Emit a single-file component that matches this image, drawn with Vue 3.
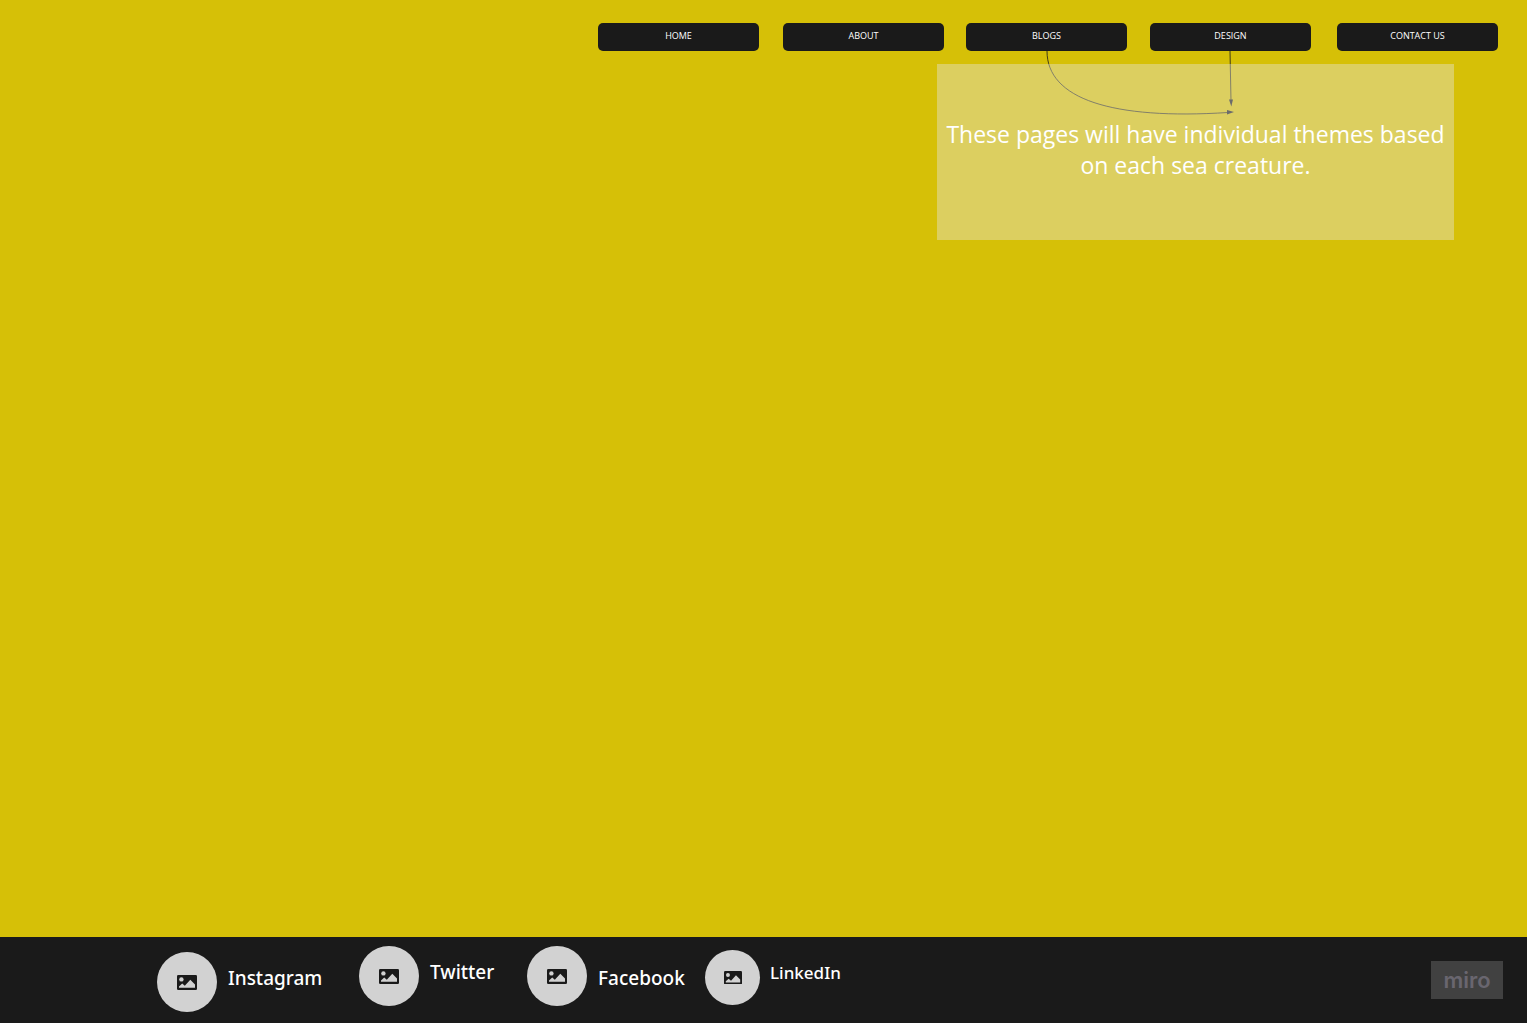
<script setup>
const pages = ['HOME', 'ABOUT', 'BLOGS', 'DESIGN', 'CONTACT US']
const socials = [
  { name: 'Instagram', place: 'low' },
  { name: 'Twitter', place: 'high' },
  { name: 'Facebook', place: 'high level' },
  { name: 'LinkedIn', place: 'small' },
]
</script>

<template>
  <div class="page">
    <header class="top">
      <nav class="menu" aria-label="Main">
        <a v-for="page in pages" :key="page" class="tab" href="#">{{ page }}</a>
      </nav>
      <svg class="arrows" width="200" height="72" viewBox="0 0 200 72" aria-hidden="true">
        <g fill="none" stroke="#1a1a1a" stroke-opacity="0.8">
          <path d="M7 0C7 48 72 69 188 61.500" />
          <path d="M190 0L191 50" />
        </g>
        <path d="M187 59L194 61L187 63.500Z" fill="#1a1a1a" />
        <path d="M189 48.500H193L191.300 55.500Z" fill="#1a1a1a" />
      </svg>
      <p class="note">These pages will have individual themes based on each sea creature.</p>
    </header>
    <main class="content"></main>
    <footer class="foot">
      <div class="socials">
        <a v-for="s in socials" :key="s.name" class="social" :class="s.place" href="#">
          <span class="disc">
            <svg class="picture" viewBox="0 0 20 15" aria-hidden="true">
              <rect width="20" height="15" rx="1.300" fill="#1a1a1a" />
              <circle cx="4.400" cy="4.400" r="2.200" fill="#d2d2d2" />
              <path d="M2 12.800V11.500L5.200 8.500L7.800 10.800L13.300 4.700L18 9.500V12.800Z" fill="#d2d2d2" />
            </svg>
          </span>
          <span class="label">{{ s.name }}</span>
        </a>
      </div>
      <span class="brand">miro</span>
    </footer>
  </div>
</template>

<style>
body {
  margin: 0;
}
</style>

<style scoped>
.page {
  display: flex;
  flex-direction: column;
  min-height: 100vh;
  background: #d6c007;
  font-family: "Open Sans", "Noto Sans", sans-serif;
}
.top {
  position: relative;
  display: flex;
  flex-direction: column;
  align-items: flex-end;
  padding-top: 23px;
}
.menu {
  display: grid;
  grid-template-columns: 185px 183px 184px 187px 161px;
  margin-right: 29px;
}
.tab {
  display: flex;
  align-items: center;
  justify-content: center;
  box-sizing: border-box;
  width: 161px;
  height: 28px;
  padding-bottom: 3px;
  border-radius: 5px;
  background: #1a1a1a;
  color: #fff;
  font-size: 9px;
  font-weight: 500;
  line-height: 12px;
  text-decoration: none;
}
.arrows {
  position: absolute;
  top: 51px;
  right: 287px;
}
.note {
  position: relative;
  box-sizing: border-box;
  width: 517px;
  height: 176px;
  margin: 13px 73px 0 0;
  padding: 55px 8px 0;
  background: rgba(230, 230, 230, 0.4);
  color: #fff;
  font-size: 23px;
  line-height: 31px;
  text-align: center;
}
.content {
  flex: 1;
}
.foot {
  display: flex;
  justify-content: space-between;
  align-items: center;
  min-height: 86px;
  padding: 0 24px 0 157px;
  background: #1a1a1a;
}
.socials {
  display: grid;
  grid-template-columns: 202px 168px 178px auto;
  align-self: flex-start;
}
.social {
  display: flex;
  align-items: center;
  align-self: start;
  gap: 11px;
  color: #fff;
  font-family: "Noto Sans", sans-serif;
  font-size: 19px;
  font-weight: 500;
  line-height: 24px;
  text-decoration: none;
}
.low {
  margin-top: 15px;
}
.high {
  margin-top: 9px;
}
.small {
  gap: 10px;
  margin-top: 13px;
  font-size: 17px;
}
.disc {
  display: flex;
  align-items: center;
  justify-content: center;
  width: 60px;
  height: 60px;
  border-radius: 50%;
  background: #d2d2d2;
}
.small .disc {
  width: 55px;
  height: 55px;
}
.picture {
  width: 20px;
}
.small .picture {
  width: 18px;
}
.label {
  padding-bottom: 9px;
}
.level .label {
  padding: 4px 0 0;
}
.brand {
  display: flex;
  align-items: center;
  justify-content: center;
  width: 72px;
  height: 38px;
  background: #414141;
  color: #69666f;
  font-family: Inter, sans-serif;
  font-size: 22px;
  font-weight: 600;
  line-height: 28px;
}
</style>
